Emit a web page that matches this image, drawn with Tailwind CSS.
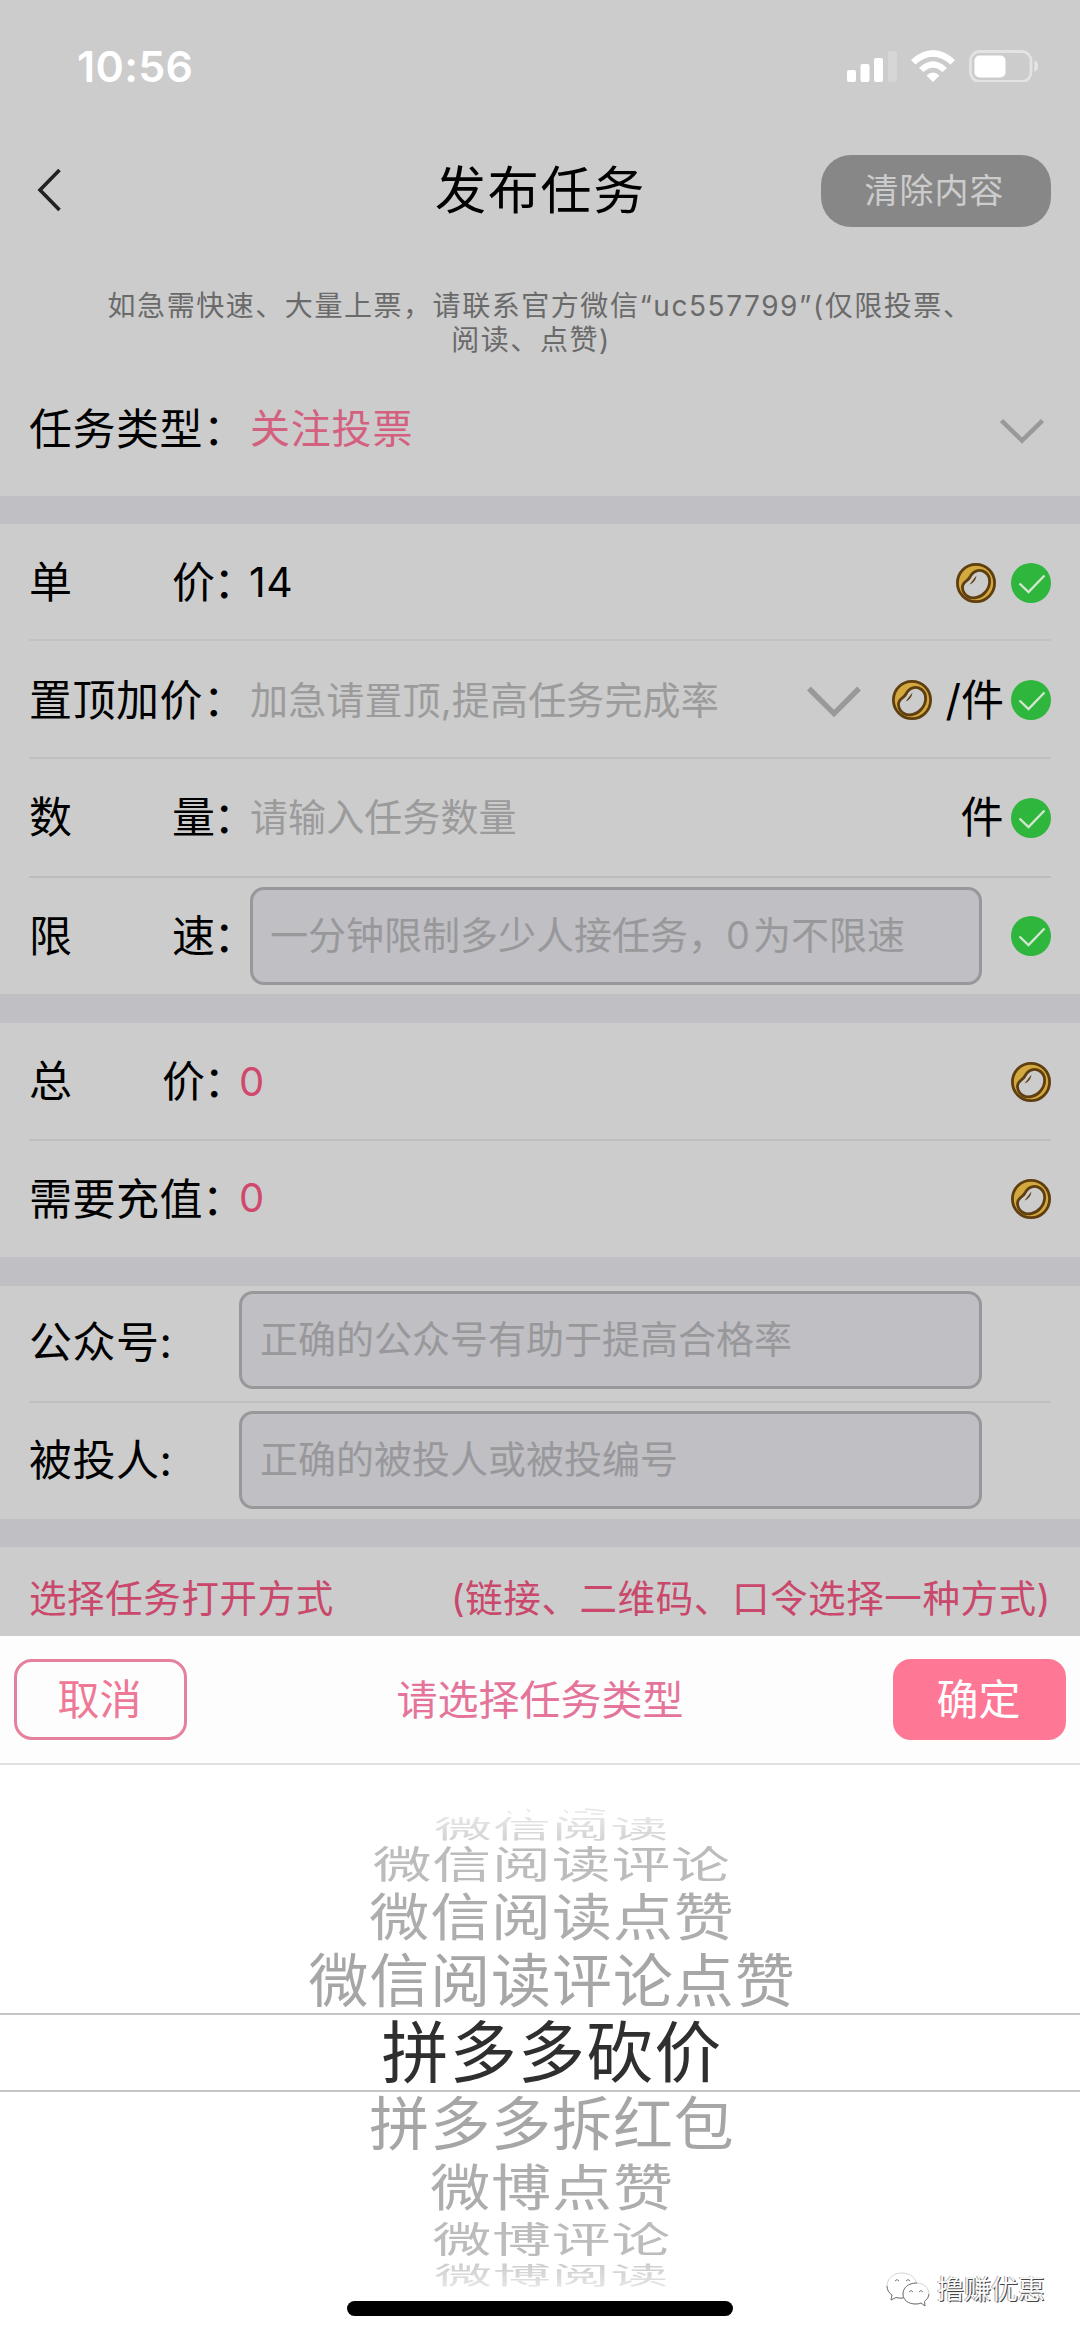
<!DOCTYPE html>
<html lang="zh-CN">
<head>
<meta charset="utf-8">
<title>发布任务</title>
<script src="https://cdn.jsdelivr.net/npm/@tailwindcss/browser@4"></script>
</head>
<body class="w-[1080px] h-[2339px] overflow-hidden bg-white font-['Inter','Noto_Sans_CJK_SC',sans-serif] text-black">
<svg class="hidden">
  <symbol id="coin" viewBox="0 0 40 40">
    <circle cx="20" cy="20" r="18.6" fill="#d3a93f" stroke="#5f3f10" stroke-width="2.8"/>
    <path d="M6.500 25C6 18.500 11.500 19 14 14C17 7.500 24 5.500 29.500 9.500C35.500 14 34.500 23 29.500 29C25 34.500 17 36.500 12 33.500C8.500 31.500 6.800 28.500 6.500 25Z" fill="#ccc" stroke="#5f3f10" stroke-width="2.8"/>
    <path d="M13.500 21.500L20.500 12.500Q19.500 19.500 13.500 21.500Z" fill="#5f3f10"/>
  </symbol>
  <symbol id="ok" viewBox="0 0 40 40">
    <circle cx="20" cy="20" r="20" fill="#2fb63c"/>
    <path d="M8.500 20.500L17.500 29L33.500 12.500" fill="none" stroke="#d3e6d0" stroke-width="2.400"/>
  </symbol>
</svg>
<div class="flex flex-col h-[2339px]">
  <div class="h-[1636px] bg-[#ccc] flex flex-col shrink-0">
    <div class="h-[132px] flex justify-between shrink-0 pl-[77px] pr-[41px] text-white">
      <div class="h-[132px] leading-[132px] text-[43px] tracking-[.3px] font-semibold">10:56</div>
      <div class="flex gap-[14px] pt-[50px]">
        <svg class="w-[50px] h-[32px]" viewBox="0 0 50 32" fill="#fff"><rect x="0" y="20" width="9" height="12" rx="2"/><rect x="13.500" y="14" width="9" height="18" rx="2"/><rect x="27" y="8" width="9" height="24" rx="2"/><rect x="41" y="1" width="9" height="31" rx="2" opacity=".2"/></svg>
        <svg class="w-[44px] h-[32px]" viewBox="0 0 44 32" fill="#fff"><path d="M0 10Q22 -10 44 10L39.500 14.500Q22 -1 4.500 14.500Z"/><path d="M8 18Q22 4.500 36 18L31.500 22Q22 13.500 12.500 22Z"/><path d="M15.500 25.500Q22 19.500 28.500 25.500L22 32Z"/></svg>
        <svg class="w-[70px] h-[32px]" viewBox="0 0 70 32"><rect x="1.500" y="1.500" width="60.500" height="30" rx="9" fill="none" stroke="#fff" stroke-opacity=".45" stroke-width="2.800"/><rect x="5.500" y="5.500" width="31" height="22" rx="5" fill="#fff"/><path d="M65.500 10Q69 12 69 16Q69 20 65.500 22Z" fill="#fff" fill-opacity=".5"/></svg>
      </div>
    </div>
    <div class="h-[118px] flex items-center justify-between shrink-0 pl-[36px] pr-[29px]">
      <svg class="w-[224px] h-[44px]" viewBox="0 0 224 44" fill="none" stroke="#222" stroke-width="3.600"><path d="M23.500 1L4 21L23.500 41"/></svg>
      <div class="text-[51px] leading-[60px] tracking-[1.800px]">发布任务</div>
      <div class="w-[230px] h-[72px] rounded-[30px] bg-[#878787] text-[#ccc] text-[34px] leading-[71px] tracking-[1px] text-center pr-[3px]">清除内容</div>
    </div>
    <div class="h-[112px] shrink-0 pt-[39px] px-[90px] text-center text-[28px] leading-[34px] tracking-[1.550px] text-[#6a6a6a] whitespace-nowrap">如急需快速、大量上票，请联系官方微信“uc557799”(仅限投票、<br><span class="mr-[18px]">阅读、点赞)</span></div>

    <div class="h-[134px] shrink-0 flex items-center justify-between pl-[29px] pr-[36px] text-[43px] tracking-[.5px]">
      <div class="flex items-center"><span class="w-[221px]">任务类型：</span><span class="text-[40px] tracking-[.8px] text-[#d4607f]">关注投票</span></div>
      <svg class="w-[44px] h-[26px] mt-[3px]" viewBox="0 0 44 26" fill="none" stroke="#999" stroke-width="4.500"><path d="M1.500 2.500L22 22.500L42.500 2.500"/></svg>
    </div>
    <div class="h-[28px] shrink-0 bg-[#bfbfc4]"></div>

    <div class="px-[29px] shrink-0 text-[43px] tracking-[.5px]">
      <div class="h-[117px] flex items-center border-b-2 border-[#c2c2c2] pt-[2px]">
        <span class="w-[143px]">单</span><span class="w-[77px] whitespace-nowrap">价<span class="-ml-[2px] tracking-[-11px]">：</span></span><span class="text-[41px] grow">14</span>
        <svg class="w-[40px] h-[40px] mr-[15px]"><use href="#coin"/></svg><svg class="w-[40px] h-[40px]"><use href="#ok"/></svg>
      </div>
      <div class="h-[118px] flex items-center border-b-2 border-[#c0c0c2] pt-[2px]">
        <span class="w-[221px]">置顶加价：</span><span class="text-[38px] tracking-[.15px] text-[#9b9b9b] grow">加急请置顶,提高任务完成率</span>
        <svg class="w-[54px] h-[34px] mr-[31px] mt-[3px]" viewBox="0 0 56 34" fill="none" stroke="#999" stroke-width="5.500"><path d="M2 3L28 29L54 3"/></svg>
        <svg class="w-[40px] h-[40px] mr-[14px]"><use href="#coin"/></svg><span class="mr-[7px] tracking-[0px]">/件</span><svg class="w-[40px] h-[40px]"><use href="#ok"/></svg>
      </div>
      <div class="h-[119px] flex items-center border-b-2 border-[#bdbdc1]">
        <span class="w-[143px]">数</span><span class="w-[78px] whitespace-nowrap">量<span class="-ml-[2px] tracking-[-11px]">：</span></span><span class="text-[38px] tracking-[.1px] text-[#9b9b9b] grow">请输入任务数量</span>
        <span class="mr-[7px]">件</span><svg class="w-[40px] h-[40px]"><use href="#ok"/></svg>
      </div>
      <div class="h-[116px] flex items-center">
        <span class="w-[143px]">限</span><span class="w-[78px] whitespace-nowrap">速<span class="-ml-[2px] tracking-[-11px]">：</span></span>
        <div class="w-[732px] h-[98px] rounded-[14px] border-3 border-[#98989b] bg-[#bfbfc4] text-[38px] leading-[90px] tracking-[0px] text-[#98989b] pl-[17px] -mt-[1px]">一分钟限制多少人接任务，<span class="mr-[3px]">0</span>为不限速</div>
        <svg class="w-[40px] h-[40px] ml-auto"><use href="#ok"/></svg>
      </div>
    </div>
    <div class="h-[29px] shrink-0 bg-[#bfbfc4]"></div>

    <div class="px-[29px] shrink-0 text-[43px] tracking-[.5px]">
      <div class="h-[118px] flex items-center border-b-2 border-[#bebec1] pt-[1px]">
        <span class="w-[133px]">总</span><span class="w-[77px] whitespace-nowrap">价<span class="-ml-[2px] tracking-[-11px]">：</span></span><span class="text-[40px] text-[#d0496d] grow">0</span>
        <svg class="w-[40px] h-[40px]"><use href="#coin"/></svg>
      </div>
      <div class="h-[116px] flex items-center">
        <span class="w-[210px] whitespace-nowrap">需要充值<span class="-ml-[1px] tracking-[-11px]">：</span></span><span class="text-[40px] text-[#d0496d] grow -mt-[3px]">0</span>
        <svg class="w-[40px] h-[40px]"><use href="#coin"/></svg>
      </div>
    </div>
    <div class="h-[29px] shrink-0 bg-[#bfbfc4]"></div>

    <div class="px-[29px] shrink-0 text-[43px] tracking-[.5px]">
      <div class="h-[117px] flex border-b-2 border-[#c0c0c2] pt-[5px]">
        <span class="w-[210px] leading-[103px]">公众号:</span>
        <div class="w-[743px] h-[98px] rounded-[14px] border-3 border-[#98989b] bg-[#bfbfc4] text-[38px] leading-[90px] tracking-[0px] text-[#98989b] pl-[18px]">正确的公众号有助于提高合格率</div>
      </div>
      <div class="h-[116px] flex pt-[8px]">
        <span class="w-[210px] leading-[99px]">被投人:</span>
        <div class="w-[743px] h-[98px] rounded-[14px] border-3 border-[#98989b] bg-[#bfbfc4] text-[38px] leading-[91px] tracking-[0px] text-[#98989b] pl-[18px]">正确的被投人或被投编号</div>
      </div>
    </div>
    <div class="h-[28px] shrink-0 bg-[#bfbfc4]"></div>
    <div class="grow flex justify-between pt-[3px] px-[29px] text-[37.500px] leading-[98px] tracking-[.6px] text-[#c9486b]">
      <span>选择任务打开方式</span><span>(链接、二维码、口令选择一种方式)</span>
    </div>
  </div>

  <div class="h-[129px] shrink-0 bg-[#fdfdfd] border-b-2 border-[#e0e0e0] flex justify-between px-[14px] pt-[23px]">
    <div class="w-[173px] h-[81px] rounded-[18px] border-3 border-[#e5819c] text-[#ee7895] text-[42px] leading-[76px] text-center pr-[2px]">取消</div>
    <div class="text-[41px] leading-[82px] text-[#e5749a]">请选择任务类型</div>
    <div class="w-[173px] h-[81px] rounded-[18px] bg-[#fe7896] text-white text-[42px] leading-[81px] text-center pr-[2px]">确定</div>
  </div>

  <div class="grow relative text-[60px] leading-[60px] text-[#a6a6a6] text-center tracking-[.9px] flex flex-col">
    <div class="pt-[42px] h-[248px] pl-[24px] flex flex-col">
      <div class="h-[8px] flex justify-center"><svg class="w-[100px] h-[8px] ml-[6px]" viewBox="0 0 100 8" fill="none" stroke="#e6e6e6" stroke-width="1.500"><path d="M3 4L6 7M22 2L25 5M59 3L63 6M70 5H82M80 2L100 4M86 7H98"/></svg></div>
      <div class="h-[28px] flex items-center justify-center"><span class="scale-x-[.965] scale-y-[.41] text-[#d2d2d2] [mask-image:linear-gradient(to_bottom,rgba(0,0,0,.55),#000)]">微信阅读</span></div>
      <div class="h-[42px] flex items-center justify-center"><span class="scale-x-[.98] scale-y-[.63] text-[#bcbcbc]">微信阅读评论</span></div>
      <div class="h-[64px] flex items-center justify-center"><span class="scale-y-[.85] text-[#adadad]">微信阅读点赞</span></div>
      <div class="h-[64px] flex items-center justify-center"><span class="scale-y-[.96]">微信阅读评论点赞</span></div>
    </div>
    <div class="h-[79px] border-y-2 border-[#c6c6c6] pl-[24px] text-[#2f2f2f] text-[67px] leading-[76px] tracking-[1.200px]">拼多多砍价</div>
    <div class="pl-[24px] flex flex-col">
      <div class="h-[64px] flex items-center justify-center"><span class="scale-y-[.96]">拼多多拆红包</span></div>
      <div class="h-[64px] flex items-center justify-center"><span class="scale-y-[.84] text-[#adadad]">微博点赞</span></div>
      <div class="h-[40px] flex items-center justify-center"><span class="scale-x-[.98] scale-y-[.61] text-[#bcbcbc]">微博评论</span></div>
      <div class="h-[30px] flex items-center justify-center"><span class="scale-x-[.965] scale-y-[.4] text-[#ccc] [mask-image:linear-gradient(to_bottom,#000,rgba(0,0,0,.5))]">微博阅读</span></div>
    </div>
    <div class="absolute left-[347px] top-[536px] w-[386px] h-[15px] rounded-full bg-black"></div>
    <div class="absolute left-[886px] top-[507px] flex items-center gap-[7px] text-[27px] leading-[36px] tracking-[0px] text-[#fafafa] [text-shadow:1px_1px_0_#444,-1px_0_0_#aaa]">
      <svg class="w-[44px] h-[36px]" viewBox="0 0 44 36" fill="#fff" stroke="#d4d4d4" stroke-width="1"><path d="M16 1C7 1 1 7 1 14C1 18 3 21 6 23L5 28L10 25.500Q13 26.500 16 26C25 26 31 21 31 14C31 7 25 1 16 1Z"/><path d="M1 14C1 18 3 21 6 23L5 28L10 25.500Q13 26.500 17 26M9 9Q11 6 13 9M20 9Q22 6 24 9" fill="none" stroke="#777"/><path d="M30 11C22 11 17 16 17 22C17 28 22 32 30 32Q33 32 35 31L39 34L38.500 29.500Q43 26 43 22C43 16 38 11 30 11Z"/><path d="M31 11C22 11 17 16 17 22C17 28 22 32 30 32Q33 32 35 31L39 34L38.500 29.500Q43 26 43 22M23 20Q25 17 27 20M33 20Q35 17 37 20" fill="none" stroke="#777"/></svg>
      <span>撸赚优惠</span>
    </div>
  </div>
</div>
</body>
</html>
